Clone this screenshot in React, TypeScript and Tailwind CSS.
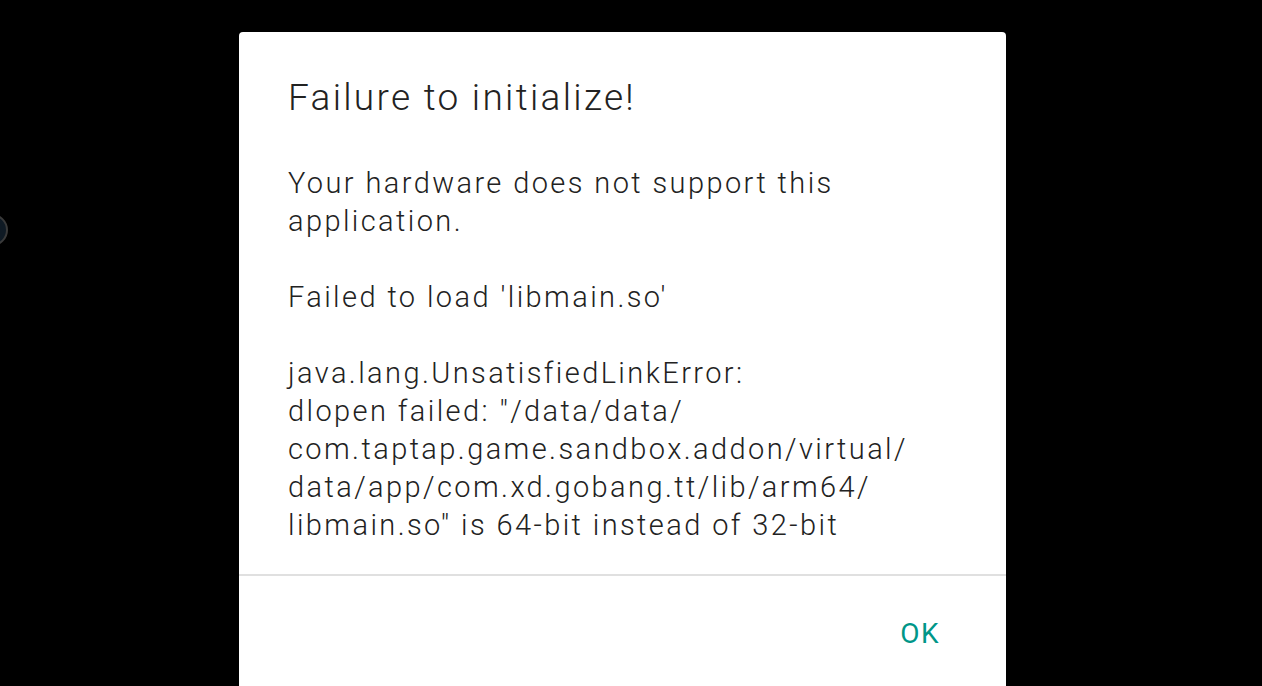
import React from 'react';

export default function App() {
  const body = ['java.lang.UnsatisfiedLinkError:', 'dlopen failed: "/data/data/', 'com.taptap.game.sandbox.addon/virtual/', 'data/app/com.xd.gobang.tt/lib/arm64/', 'libmain.so" is 64-bit instead of 32-bit'];

  return (
    <div className="relative h-[686px] w-[1262px] overflow-hidden bg-black font-['Roboto',sans-serif]">
      {/* edge of a floating button behind the dialog */}
      <div className="absolute left-[-24px] top-[214px] h-[32px] w-[32px] rounded-full border-2 border-[#3a3a3a] bg-[#0f1a24]" />

      <div className="pl-[239px] pt-[32px]">
        <div className="flex h-[700px] w-[767px] flex-col rounded-t-[4px] bg-white">
          <div className="px-[49px] pt-[46px] text-[#222222] font-light">
            <h1 className="text-[37px] leading-[40px] tracking-[2.3px]">Failure to initialize!</h1>
            <div className="mt-[46px] text-[29px] leading-[38px] tracking-[2.4px]">
              <p>Your hardware does not support this</p>
              <p>application.</p>
              <p className="mt-[38px]">Failed to load 'libmain.so'</p>
              <div className="mt-[38px]">
                {body.map((line) => (
                  <p key={line}>{line}</p>
                ))}
              </div>
            </div>
          </div>
          <div className="mt-[30px] h-[2px] bg-[#e0e0e0]" />
          <div className="flex justify-end px-[66px] pt-[38px]">
            <button className="text-[28px] leading-[40px] tracking-[1.5px] text-[#009688]">OK</button>
          </div>
        </div>
      </div>
    </div>
  );
}
